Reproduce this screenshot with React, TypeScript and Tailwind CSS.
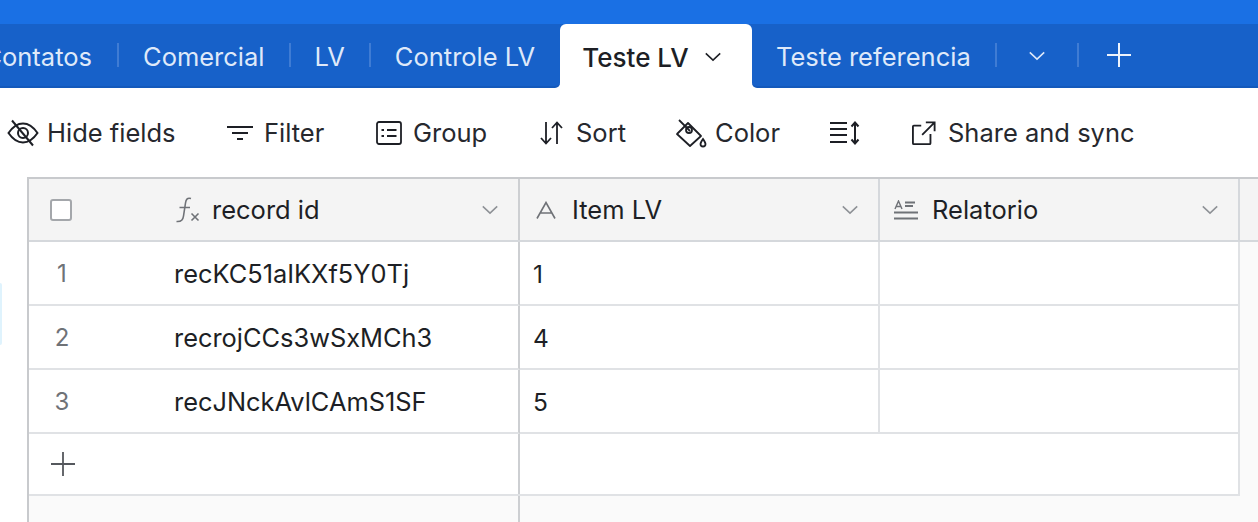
import React from "react";

const Sep = () => <div className="w-[2px] h-6 bg-[#3f7cd4] shrink-0" />;

const Chevron = ({ className }: { className: string }) => (
  <svg viewBox="0 0 20 12" className={className} fill="none" stroke="currentColor" strokeWidth="1.7">
    <path d="M2 2.5 L10 10 L18 2.5" />
  </svg>
);

const Tab = ({ label }: { label: string }) => (
  <div className="px-6 pt-[4px] shrink-0 text-[#dfe9f9]">{label}</div>
);

const Tool = ({ icon, label, className }: { icon: React.ReactNode; label?: string; className: string }) => (
  <div className={`flex items-center shrink-0 ${className}`}>
    {icon}
    {label && <span>{label}</span>}
  </div>
);

const EyeOff = () => (
  <svg viewBox="0 0 32 28" className="w-8 h-7 ml-[7px] mr-[8px]" fill="none" stroke="#1d1f25" strokeWidth="2">
    <path d="M1.5 14 C7 6 12 4.5 16 4.5 C20 4.5 25 6 30.5 14 C25 22 20 23.5 16 23.5 C12 23.5 7 22 1.5 14 Z" />
    <circle cx="16" cy="14" r="5" />
    <path d="M5 1.5 L26 26.5" />
  </svg>
);
const FilterI = () => (
  <svg viewBox="0 0 28 16" className="w-7 h-4 mr-[10px]" fill="none" stroke="#1d1f25" strokeWidth="2">
    <path d="M1 2 H27 M6 8 H22 M11 14 H17" />
  </svg>
);
const GroupI = () => (
  <svg viewBox="0 0 26 24" className="w-[26px] h-6 mr-[11px]" fill="none" stroke="#1d1f25" strokeWidth="1.8">
    <rect x="1" y="1" width="24" height="22" rx="2" />
    <path d="M5.5 9 H8 M5.5 15 H8 M11 9 H20.5 M11 15 H20.5" strokeWidth="2" />
  </svg>
);
const SortI = () => (
  <svg viewBox="0 0 24 24" className="w-6 h-6 mr-[13px]" fill="none" stroke="#1d1f25" strokeWidth="1.8">
    <path d="M7 1 V22 M2 17 L7 22.5 L12 17 M18 23 V2 M13 7 L18 1.5 L23 7" />
  </svg>
);
const ColorI = () => (
  <svg viewBox="0 0 32 30" className="w-8 h-[30px] mr-[8px]" fill="none" stroke="#1d1f25" strokeWidth="1.8">
    <path d="M13 5 L26 18 L15 28 L2 16 Z" strokeLinejoin="round" />
    <path d="M4 2 L15 13" />
    <circle cx="14" cy="12" r="3" />
    <path d="M28 21 C26 24 25.5 25 25.5 26 A2.5 2.5 0 0 0 30.5 26 C30.5 25 30 24 28 21 Z" />
  </svg>
);
const HeightI = () => (
  <svg viewBox="0 0 30 24" className="w-[30px] h-6" fill="none" stroke="#1d1f25" strokeWidth="2">
    <path d="M0 2 H17 M0 8 H17 M0 14 H17 M0 21 H17" />
    <path d="M25 2 V22 M21.5 5.5 L25 1.5 L28.5 5.5 M21.5 18.5 L25 22.5 L28.5 18.5" />
  </svg>
);
const ShareI = () => (
  <svg viewBox="0 0 26 26" className="w-6 h-6 ml-[2px] mr-[12px]" fill="none" stroke="#1d1f25" strokeWidth="2">
    <path d="M10 5 H2 A1 1 0 0 0 1 6 V24 A1 1 0 0 0 2 25 H19 A1 1 0 0 0 20 24 V14" />
    <path d="M11 15 L24.5 1.5 M15 1.5 H24.5 V11" />
  </svg>
);
const FxI = () => (
  <svg viewBox="0 0 24 26" className="w-6 h-[26px] mr-3" fill="none" stroke="#6f7277" strokeWidth="1.6">
    <path d="M15 1.5 C11 0.5 10 2.5 9.5 6 L7.5 19 C7 23 5 25 0.5 24.5 M3.5 10.5 H14" />
    <path d="M15.5 16.5 L22.5 23.5 M22.5 16.5 L15.5 23.5" strokeWidth="1.6" />
  </svg>
);
const AI = () => (
  <svg viewBox="0 0 20 18" className="w-5 h-[18px] mr-4" fill="none" stroke="#6f7277" strokeWidth="1.6">
    <path d="M1 17.5 L10 1.5 L19 17.5 M4.5 12 H15.5" />
  </svg>
);
const LongI = () => (
  <svg viewBox="0 0 24 20" className="w-6 h-5 mr-[14px]" fill="none" stroke="#6f7277" strokeWidth="1.5">
    <path d="M1 9 L4.5 1 L8 9 M2.3 6.5 H6.7" strokeWidth="1.4" />
    <path d="M11 2.5 H21 M11 6 H19 M0 12.5 H24 M0 18.5 H24" strokeWidth="1.8" />
  </svg>
);

const Hdr = ({ icon, label, className }: { icon: React.ReactNode; label: string; className: string }) => (
  <div className={`flex items-center shrink-0 h-full border-r-2 border-[#d5d8dc] bg-[#f4f4f4] ${className}`}>
    {icon}
    <span className="flex-1">{label}</span>
    <Chevron className="w-[18px] h-[11px] text-[#8e9196] mr-[19px]" />
  </div>
);

const rows = [
  ["1", "recKC51aIKXf5Y0Tj", "1"],
  ["2", "recrojCCs3wSxMCh3", "4"],
  ["3", "recJNckAvlCAmS1SF", "5"],
];

export default function App() {
  return (
    <div
      className="relative w-[1258px] h-[522px] overflow-hidden bg-white text-[25.5px] leading-8 text-[#1d1f25]"
      style={{ fontFamily: "Inter, sans-serif" }}
    >
      <div className="h-6 bg-[#1a70e4]" />

      <div className="flex h-16 bg-white">
        <div className="flex items-center w-[560px] shrink-0 h-full bg-[#1761c9] border-b-2 border-[#1459bb] rounded-br-[5px]">
          <div className="w-[117px] shrink-0 pt-[4px] overflow-hidden flex justify-end pr-[25px] text-[#dfe9f9]">Contatos</div>
          <Sep />
          <Tab label="Comercial" />
          <Sep />
          <Tab label="LV" />
          <Sep />
          <Tab label="Controle LV" />
        </div>
        <div className="w-[192px] shrink-0 h-full bg-[#1761c9]">
          <div className="flex items-center justify-center gap-[15px] pr-[8px] h-full bg-white text-[26px] text-[#1d1f25] font-medium rounded-t-[6px]">
            <span className="pt-[4px]">Teste LV</span>
            <Chevron className="w-[18px] h-[11px] text-[#1d1f25]" />
          </div>
        </div>
        <div className="flex items-center flex-1 h-full bg-[#1761c9] border-b-2 border-[#1459bb] rounded-bl-[5px]">
          <Tab label="Teste referencia" />
          <Sep />
          <div className="w-[80px] flex justify-center shrink-0">
            <Chevron className="w-[18px] h-[11px] text-[#dfe9f9]" />
          </div>
          <Sep />
          <div className="w-[80px] flex justify-center shrink-0">
            <svg viewBox="0 0 24 24" className="w-6 h-6" fill="none" stroke="#eef3fc" strokeWidth="2">
              <path d="M12 0 V24 M0 12 H24" />
            </svg>
          </div>
        </div>
      </div>

      <div className="flex items-center h-[89px] text-[#26282e]">
        <Tool icon={<EyeOff />} label="Hide fields" className="w-[226px]" />
        <Tool icon={<FilterI />} label="Filter" className="w-[150px]" />
        <Tool icon={<GroupI />} label="Group" className="w-[163px]" />
        <Tool icon={<SortI />} label="Sort" className="w-[136px]" />
        <Tool icon={<ColorI />} label="Color" className="w-[155px]" />
        <Tool icon={<HeightI />} className="w-[80px]" />
        <Tool icon={<ShareI />} label="Share and sync" className="w-[240px]" />
      </div>

      <div className="ml-[27px] h-[345px] border-l-2 border-t-2 border-[#c8cacd] bg-[#fafafa] flex flex-col">
        <div className="flex items-center h-[63px] shrink-0 border-b-2 border-[#d5d8dc] bg-[#f4f4f4]">
          <div className="w-[491px] flex items-center h-full shrink-0 border-r-2 border-[#cdcfd2] bg-[#f4f4f4]">
            <div className="w-[22px] h-[22px] ml-[21px] mr-[104px] rounded-[3px] border-2 border-[#a4a7ab] bg-white shrink-0" />
            <FxI />
            <span className="flex-1">record id</span>
            <Chevron className="w-[18px] h-[11px] text-[#8e9196] mr-[19px]" />
          </div>
          <Hdr icon={<span className="ml-[16px]"><AI /></span>} label="Item LV" className="w-[360px]" />
          <Hdr icon={<span className="ml-[14px]"><LongI /></span>} label="Relatorio" className="w-[360px]" />
        </div>

        {rows.map((r) => (
          <div key={r[0]} className="flex h-16 shrink-0">
            <div className="w-[491px] shrink-0 flex items-center border-r-2 border-b-2 border-r-[#cdcfd2] border-b-[#e0e2e5] bg-white">
              <span className="w-[66px] pt-[2px] text-center shrink-0 text-[#6f7277] text-[24px]">{r[0]}</span>
              <span className="ml-[79px] pt-[2px] text-[25.4px]">{r[1]}</span>
            </div>
            <div className="w-[360px] shrink-0 flex items-center pl-[13px] pt-[2px] border-r-2 border-b-2 border-[#e0e2e5] bg-white text-[24.5px]">
              {r[2]}
            </div>
            <div className="w-[360px] shrink-0 border-r-2 border-b-2 border-[#e0e2e5] bg-white" />
          </div>
        ))}

        <div className="flex h-[62px] shrink-0 w-[1211px] border-r-2 border-b-2 border-[#e0e2e5] bg-white">
          <div className="w-[491px] shrink-0 flex items-center pl-[22px] border-r-2 border-[#cdcfd2]">
            <svg viewBox="0 0 24 24" className="w-6 h-6" fill="none" stroke="#55585d" strokeWidth="1.8">
              <path d="M12 0 V24 M0 12 H24" />
            </svg>
          </div>
        </div>

        <div className="flex flex-1">
          <div className="w-[491px] shrink-0 border-r-2 border-[#cdcfd2]" />
        </div>
      </div>

      <div className="absolute left-0 top-[283px] w-[2px] h-[62px] bg-[#dff3fd] rounded-r-[2px]" />
    </div>
  );
}
